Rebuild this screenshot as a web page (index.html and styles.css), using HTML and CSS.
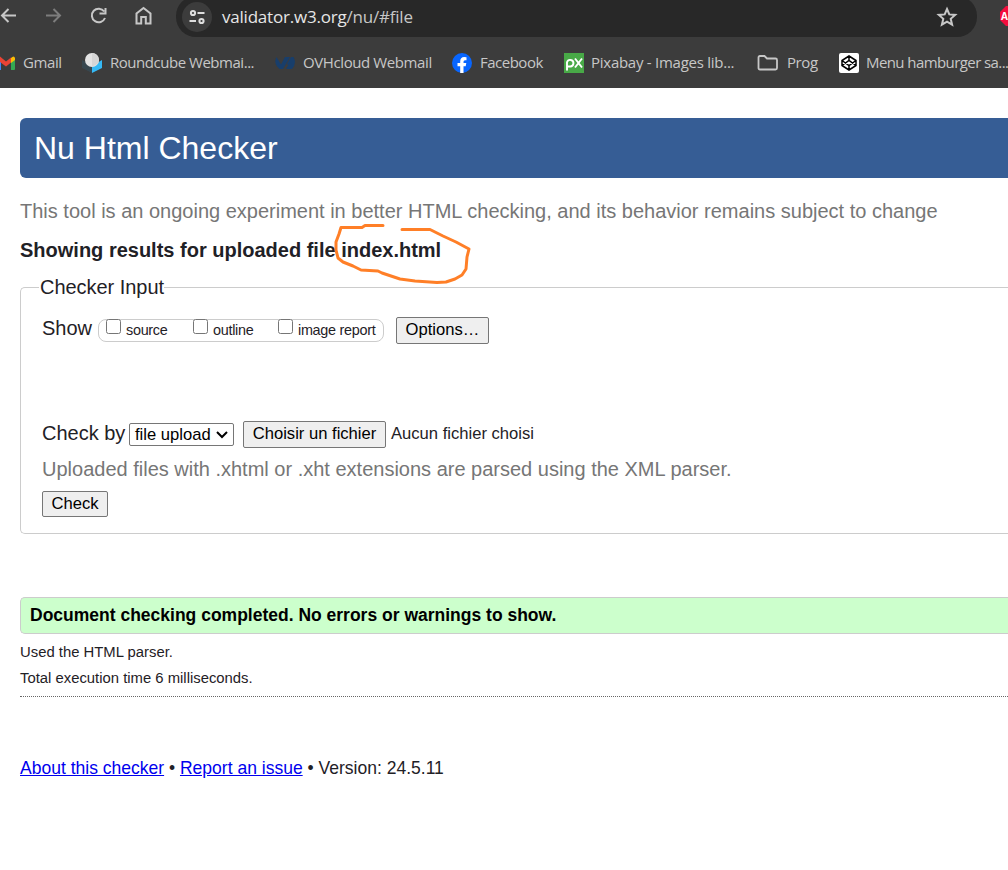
FILE: index.html
```
<!DOCTYPE html>
<html lang="en">
<head>
<meta charset="utf-8">
<title>Nu Html Checker</title>
<link rel="stylesheet" href="styles.css">
</head>
<body>
<header class="browser">
  <div class="toolbar">
    <svg class="nav-icons" width="176" height="37" fill="none" stroke="#c7c7c7" stroke-width="2">
      <path d="M16 15.500H2M8.500 9L2 15.500L8.500 22"/>
      <path stroke="#7d7d7d" d="M46 15.500H60M53.500 9L60 15.500L53.500 22"/>
      <path d="M104.200 11.500A6.800 6.800 0 1 0 105 18M105.500 8V13.500H99.500"/>
      <path d="M136.500 23.500V13.500L143.500 8L150.500 13.500V23.500H145.800V17H141.200V23.500Z"/>
    </svg>
    <div class="address">
      <span class="site-info"><svg width="18" height="18" fill="none" stroke="#dedede" stroke-width="2"><circle cx="5" cy="5" r="2.100"/><path d="M9.500 5H16.500M1.500 13H8"/><circle cx="13.500" cy="13" r="2.100"/></svg></span>
      <span class="url">validator.w3.org<span class="url-path">/nu/#file</span></span>
      <svg class="star" width="22" height="22" fill="none" stroke="#c7c7c7" stroke-width="2"><path d="M11 3L13.300 8.400L19.200 8.900L14.700 12.800L16.100 18.700L11 15.600L5.900 18.700L7.300 12.800L2.800 8.900L8.700 8.400Z"/></svg>
    </div>
    <svg class="extension" width="8" height="20"><path fill="#f40d3d" d="M6 0H8V20H6L0 14V6Z"/><text class="ext-text" x="1" y="14">A</text></svg>
  </div>
  <nav class="bookmarks">
    <span class="mark gmail"><svg width="20" height="20"><path fill="#4285f4" d="M0 5L1 8V17H0Z"/><path fill="#34a853" d="M11 9L15 6V16Q15 17 14 17H11Z"/><path fill="#ea4335" d="M0 3.500L6 8.500L11 4.500V9.500L6 13.500L0 9Z"/><path fill="#fbbc04" d="M11 5Q14 2 15 5V7L11 10Z"/></svg><span class="label">Gmail</span></span>
    <span class="mark roundcube"><svg width="20" height="20"><path fill="#37474f" d="M0 7L10 12V20L0 15Z"/><path fill="#35b9f5" d="M20 7L10 13V20L20 15Z"/><circle cx="10" cy="7" r="7" fill="#e4e4e4"/><path fill="#d6d6d6" d="M10 0A7 7 0 0 1 16 10.500L10 14Z"/></svg><span class="label">Roundcube Webmai...</span></span>
    <span class="mark ovh"><svg width="20" height="20"><path fill="#183e6b" d="M1.500 4L6 11.500L10 4H15L8 16H4.500Q-2 10 1.500 4ZM16 4H18.500Q22 10.500 17 16H11L13.500 11.500H11.500Z"/></svg><span class="label">OVHcloud Webmail</span></span>
    <span class="mark facebook"><svg width="20" height="20"><circle cx="10" cy="10" r="10" fill="#0866ff"/><path fill="#fff" d="M8.200 20V13.300H5.500V10H8.200V8.500Q8.200 4 12.200 4Q13.500 4 14.500 4.300V7.200H13Q11.500 7.200 11.500 8.700V10H14.300L13.700 13.300H11.500V20Z"/></svg><span class="label">Facebook</span></span>
    <span class="mark pixabay"><svg width="20" height="20" fill="none" stroke="#fff" stroke-width="1.900"><path fill="#48a947" stroke="none" d="M0 0H20V20H0Z"/><path d="M3 17.500V9.200A3.300 3.300 0 1 1 6.300 13.500H3M11 5.500L18 14.500M18 5.500L11 14.500"/></svg><span class="label">Pixabay - Images lib...</span></span>
    <span class="mark prog"><svg width="22" height="20" fill="none" stroke="#c7c7c7" stroke-width="1.800"><path d="M3 3H7.500L10 5.500H18.500Q20 5.500 20 7V15Q20 16.500 18.500 16.500H3Q1.500 16.500 1.500 15V4.500Q1.500 3 3 3Z"/></svg><span class="label">Prog</span></span>
    <span class="mark menu"><svg width="20" height="20" fill="none" stroke="#000" stroke-width="1.500"><rect width="20" height="20" rx="2" fill="#fff" stroke="none"/><path d="M10 3L17 7.500V12.500L10 17L3 12.500V7.500ZM10 3V7.500M10 12.500V17M3 7.500L10 12.500L17 7.500M3 12.500L10 7.500L17 12.500"/></svg><span class="label">Menu hamburger sa...</span></span>
  </nav>
</header>
<main class="page">
  <h1 class="banner">Nu Html Checker</h1>
  <p class="intro">This tool is an ongoing experiment in better HTML checking, and its behavior remains subject to change</p>
  <h2 class="results">Showing results for uploaded file <span class="filename">index.html<svg class="scribble" width="142" height="64" fill="none" stroke="#ff7f27" stroke-width="3" stroke-linecap="round" stroke-linejoin="round"><path d="M49 4.500H31L28 6.500H7L5 13L2 21V29L4 37L9 41L19 45L27 49L44 50L48 52L66 58L81 60L103 61.500L112 61L121 58L128 54L132 48L133 36L135 28L122 21L109 15L96 8.500H68"/></svg></span></h2>
  <fieldset class="checker">
    <legend>Checker Input</legend>
    <div class="show-row">
      <span class="show-label">Show</span>
      <span class="checks">
        <label class="check c-source"><input type="checkbox"><span>source</span></label>
        <label class="check c-outline"><input type="checkbox"><span>outline</span></label>
        <label class="check"><input type="checkbox"><span>image report</span></label>
      </span>
      <button class="button options">Options…</button>
    </div>
    <div class="by-row">
      <span class="by-label">Check by</span>
      <button class="select">file upload<svg width="12" height="8" fill="none" stroke="#000" stroke-width="2"><path d="M1 1L6 6L11 1"/></svg></button>
      <button class="button choose">Choisir un fichier</button>
      <span class="nofile">Aucun fichier choisi</span>
    </div>
    <p class="hint">Uploaded files with .xhtml or .xht extensions are parsed using the XML parser.</p>
    <button class="button submit">Check</button>
  </fieldset>
  <p class="success">Document checking completed. No errors or warnings to show.</p>
  <div class="details"><p>Used the HTML parser.</p><p>Total execution time 6 milliseconds.</p></div>
  <footer class="about"><a href="#about">About this checker</a> • <a href="#issue">Report an issue</a> • Version: 24.5.11</footer>
</main>
</body>
</html>
```
FILE: styles.css
```
* { box-sizing: border-box; }
body { margin: 0; height: 870px; overflow: hidden; background: #fff; color: #1f2126; font-family: "Liberation Sans", Arial, sans-serif; }
p, h1, h2 { margin: 0; white-space: nowrap; }
svg { display: block; flex: none; }
.browser { height: 88px; background: #3c3c3c; overflow: hidden; font-family: "Open Sans", sans-serif; }
.toolbar { display: flex; height: 37px; }
.nav-icons { flex: none; }
.address { display: flex; flex: none; width: 801px; height: 41px; margin-top: -4px; padding: 4px 19px 4px 6px; border-radius: 20px; background: #282828; align-items: center; }
.site-info { display: grid; place-items: center; width: 30px; height: 30px; border-radius: 50%; background: #3c3c3c; }
.url { margin-left: 10px; color: #e6e6e6; font-size: 17px; letter-spacing: -.21px; white-space: nowrap; }
.url-path { color: #c7c7c7; }
.star { margin-left: auto; }
.extension { margin: 6px 0 0 23px; }
.ext-text { fill: #fff; font-size: 10px; font-weight: 700; }
.bookmarks { display: flex; height: 51px; align-items: center; color: #c7c7c7; font-size: 15px; }
.mark { display: flex; flex: none; gap: 8px; align-items: center; white-space: nowrap; }
.label { margin-top: -2px; letter-spacing: -.4px; }
.gmail { width: 82px; gap: 3px; }
.roundcube { width: 193px; }
.roundcube .label { letter-spacing: -.47px; }
.ovh { width: 177px; }
.facebook { width: 112px; }
.facebook .label { letter-spacing: -.5px; }
.pixabay { width: 193px; gap: 7px; }
.pixabay .label { letter-spacing: -.26px; }
.prog { width: 82px; }
.menu { width: 169px; gap: 7px; }
.menu .label { letter-spacing: -.58px; }
.page { padding: 30px 0 0 20px; }
.banner { height: 60px; padding-left: 14px; border-radius: 6px 0 0 6px; background: #365d95; color: #fff; font-size: 32px; font-weight: 400; line-height: 60px; }
.intro { margin-top: 18px; height: 30px; color: #767676; font-size: 20px; line-height: 30px; }
.results { margin-top: 9px; height: 30px; font-size: 20px; line-height: 30px; }
.filename { position: relative; }
.scribble { position: absolute; left: -7px; top: -18px; }
.checker { height: 259px; margin: 10px 0 0; padding: 16px 0 0 21px; border: 1px solid #ccc; border-right: 0; border-radius: 5px 0 0 5px; font-size: 20px; }
.checker legend { height: 24px; margin-left: -3px; padding: 0 0 0 1px; line-height: 24px; letter-spacing: -.04px; }
.show-row { display: flex; height: 30px; }
.show-label { width: 56px; line-height: 26px; }
.checks { display: flex; width: 286px; height: 23px; margin-top: 4px; padding-left: 7px; border: 1px solid #ccc; border-radius: 8px; font-size: 14.400px; line-height: 20px; letter-spacing: -.28px; }
.check { display: flex; gap: 5px; white-space: nowrap; }
.check input { width: 15px; height: 15px; margin: -1px 0 0; }
.c-source { width: 87px; }
.c-outline { width: 85px; }
.button { border: 1px solid #767676; border-radius: 2px; background: #efefef; color: #000; font: 16.600px/20px "Liberation Sans", Arial, sans-serif; white-space: nowrap; padding: 0; }
.options { width: 93px; height: 27px; margin: 2px 0 0 12px; padding-bottom: 2px; }
.by-row { display: flex; height: 27px; margin-top: 76px; }
.by-label { width: 87px; line-height: 24px; white-space: nowrap; }
.select { display: flex; align-items: center; justify-content: space-between; width: 105px; height: 23px; margin-top: 2px; padding: 0 5px; border: 1px solid #767676; border-radius: 2px; background: #fff; color: #000; font: 16.600px "Liberation Sans", Arial, sans-serif; white-space: nowrap; }
.choose { width: 143px; height: 27px; margin-left: 9px; padding-bottom: 1px; }
.nofile { margin-left: 5px; font-size: 16.600px; line-height: 25px; white-space: nowrap; }
.hint { margin-top: 6px; height: 30px; color: #767676; line-height: 30px; }
.submit { display: block; width: 66px; height: 26px; margin-top: 7px; padding-bottom: 1px; }
.success { height: 37px; margin-top: 63px; padding-left: 9px; border: 1px solid #ccc; border-right: 0; border-radius: 5px 0 0 5px; background: #cfc; color: #000; font-size: 17.500px; font-weight: 700; line-height: 34px; }
.details { height: 63px; padding-top: 5px; border-bottom: 1px dotted #666; font-size: 14.850px; line-height: 26px; }
.about { margin-top: 60px; font-size: 17.520px; line-height: 22px; white-space: nowrap; }
.about a { color: #00e; }
```
